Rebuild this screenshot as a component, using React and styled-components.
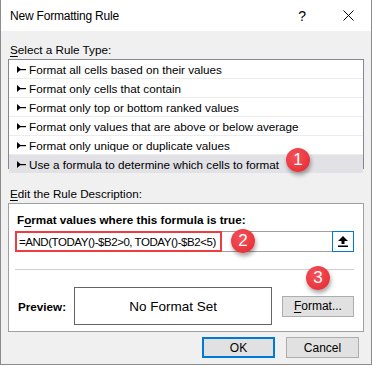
import React from 'react';
import styled, { createGlobalStyle } from 'styled-components';

const Global = createGlobalStyle`
  body {
    margin: 0;
    background: #ffffff;
    font-family: "Liberation Sans", Arial, sans-serif;
  }
`;

const Window = styled.div`
  position: relative;
  width: 370px;
  height: 364px;
  border-left: 1px solid #8c8c8c;
  border-right: 1px solid #8c8c8c;
  border-bottom: 1px solid #8c8c8c;
  background: #f0f0f0;
  color: #000;
  font-size: 11.7px;
  display: flex;
  flex-direction: column;
`;

const TitleBar = styled.div`
  height: 31px;
  background: #ffffff;
  display: flex;
  align-items: center;
  padding-left: 9px;
  font-size: 12px;
  letter-spacing: -0.2px;
`;

const Title = styled.div`
  flex: 1;
`;

const TitleButton = styled.div`
  width: 46px;
  display: flex;
  justify-content: center;
  font-size: 14px;
`;

const Body = styled.div`
  padding: 9px 7px 0 7px;
  display: flex;
  flex-direction: column;
`;

const Label = styled.div`
  height: 19px;
  line-height: 19px;
  padding-left: 2px;
  margin-top: ${({ gap }) => gap || 0}px;
  font-weight: ${({ bold }) => (bold ? 700 : 400)};
`;

const Key = styled.span`
  text-decoration: underline;
  text-underline-offset: 2px;
`;

const RuleList = styled.div`
  border: 1px solid #828790;
  background: #ffffff;
  padding: 0 0 1px 0;
  height: 110px;
  box-sizing: border-box;
`;

const Row = styled.div`
  height: 18px;
  display: flex;
  align-items: center;
  padding-left: 8px;
  gap: 3px;
  border-bottom: 1px solid #ececec;
  background: ${({ selected }) => (selected ? '#e1e1e6' : '#ffffff')};
  &:last-child {
    border-bottom: none;
  }
`;

const Arrow = () => (
  <svg width="9" height="7" viewBox="0 0 9 7">
    <path d="M0 0 L0 7 L4 3.5 Z" fill="#000" />
    <rect x="3" y="3" width="6" height="1.2" fill="#000" />
  </svg>
);

const DescBox = styled.div`
  border: 1px solid #a0a0a0;
  background: #ffffff;
  height: 129px;
  box-sizing: border-box;
  padding: 6px 9px 0 6px;
  display: flex;
  flex-direction: column;
`;

const FormulaRow = styled.div`
  margin-top: 2px;
  height: 21px;
  display: flex;
  border: 1px solid #a0a0a0;
  box-sizing: border-box;
  position: relative;
`;

const FormulaText = styled.div`
  flex: 1;
  display: flex;
  align-items: center;
  padding-left: 3px;
  font-size: 11.5px;
  letter-spacing: -0.45px;
`;

const Highlight = styled.div`
  position: absolute;
  left: -1px;
  top: -1px;
  width: 207px;
  height: 21px;
  border: 2px solid #ef3b42;
  box-sizing: border-box;
`;

const CollapseButton = styled.div`
  width: 20px;
  margin: -1px -1px -1px 0;
  border: 1px solid #0078d7;
  display: flex;
  align-items: center;
  justify-content: center;
  background: #fff;
`;

const Separator = styled.div`
  margin-top: 17px;
  height: 1px;
  background: #d0d0d0;
`;

const PreviewRow = styled.div`
  margin-top: 17px;
  display: flex;
  align-items: center;
`;

const PreviewLabel = styled.div`
  width: 57px;
  padding-left: 3px;
  font-weight: 700;
`;

const PreviewBox = styled.div`
  width: 200px;
  height: 38px;
  border: 1px solid #646464;
  box-sizing: border-box;
  display: flex;
  align-items: center;
  justify-content: center;
  font-size: 13.5px;
`;

const Button = styled.div`
  width: 73px;
  height: 21px;
  box-sizing: border-box;
  background: #e1e1e1;
  border: ${({ primary }) => (primary ? '2px solid #0078d7' : '1px solid #adadad')};
  display: flex;
  align-items: center;
  justify-content: center;
  font-size: 12px;
`;

const FormatButton = styled(Button)`
  margin-left: 10px;
`;

const Footer = styled.div`
  display: flex;
  justify-content: flex-end;
  gap: 11px;
  padding: 5px 5px 0 0;
`;

const Badge = styled.div`
  position: absolute;
  left: ${({ x }) => x}px;
  top: ${({ y }) => y}px;
  width: 24px;
  height: 24px;
  border-radius: 50%;
  background: radial-gradient(circle at 40% 35%, #f5525a 0%, #e8343c 70%, #d9282f 100%);
  box-shadow: 1px 3px 4px rgba(0, 0, 0, 0.35);
  color: #fff;
  display: flex;
  align-items: center;
  justify-content: center;
  font-size: 17px;
`;

const rules = [
  'Format all cells based on their values',
  'Format only cells that contain',
  'Format only top or bottom ranked values',
  'Format only values that are above or below average',
  'Format only unique or duplicate values',
  'Use a formula to determine which cells to format',
];

export default function App() {
  return (
    <>
      <Global />
      <Window>
        <TitleBar>
          <Title>New Formatting Rule</Title>
          <TitleButton>?</TitleButton>
          <TitleButton>
            <svg width="11" height="11" viewBox="0 0 11 11">
              <path d="M0.5 0.5 L10.5 10.5 M10.5 0.5 L0.5 10.5" stroke="#000" strokeWidth="1" />
            </svg>
          </TitleButton>
        </TitleBar>
        <Body>
          <Label>
            <Key>S</Key>elect a Rule Type:
          </Label>
          <RuleList>
            {rules.map((r, i) => (
              <Row key={r} selected={i === rules.length - 1}>
                <Arrow />
                <span>{r}</span>
              </Row>
            ))}
          </RuleList>
          <Label gap={15}>
            <Key>E</Key>dit the Rule Description:
          </Label>
          <DescBox>
            <Label bold>
              F<Key>o</Key>rmat values where this formula is true:
            </Label>
            <FormulaRow>
              <FormulaText>=AND(TODAY()-$B2&gt;0, TODAY()-$B2&lt;5)</FormulaText>
              <Highlight />
              <CollapseButton>
                <svg width="10" height="11" viewBox="0 0 10 11">
                  <path d="M5 0 L10 5 L6.5 5 L6.5 8 L3.5 8 L3.5 5 L0 5 Z" fill="#000" />
                  <rect x="0" y="9.5" width="10" height="1.5" fill="#000" />
                </svg>
              </CollapseButton>
            </FormulaRow>
            <Separator />
            <PreviewRow>
              <PreviewLabel>Preview:</PreviewLabel>
              <PreviewBox>No Format Set</PreviewBox>
              <FormatButton>
                <Key>F</Key>ormat...
              </FormatButton>
            </PreviewRow>
          </DescBox>
          <Footer>
            <Button primary>OK</Button>
            <Button>Cancel</Button>
          </Footer>
        </Body>
        <Badge x={285} y={148}>1</Badge>
        <Badge x={230} y={229}>2</Badge>
        <Badge x={305} y={266}>3</Badge>
      </Window>
    </>
  );
}
